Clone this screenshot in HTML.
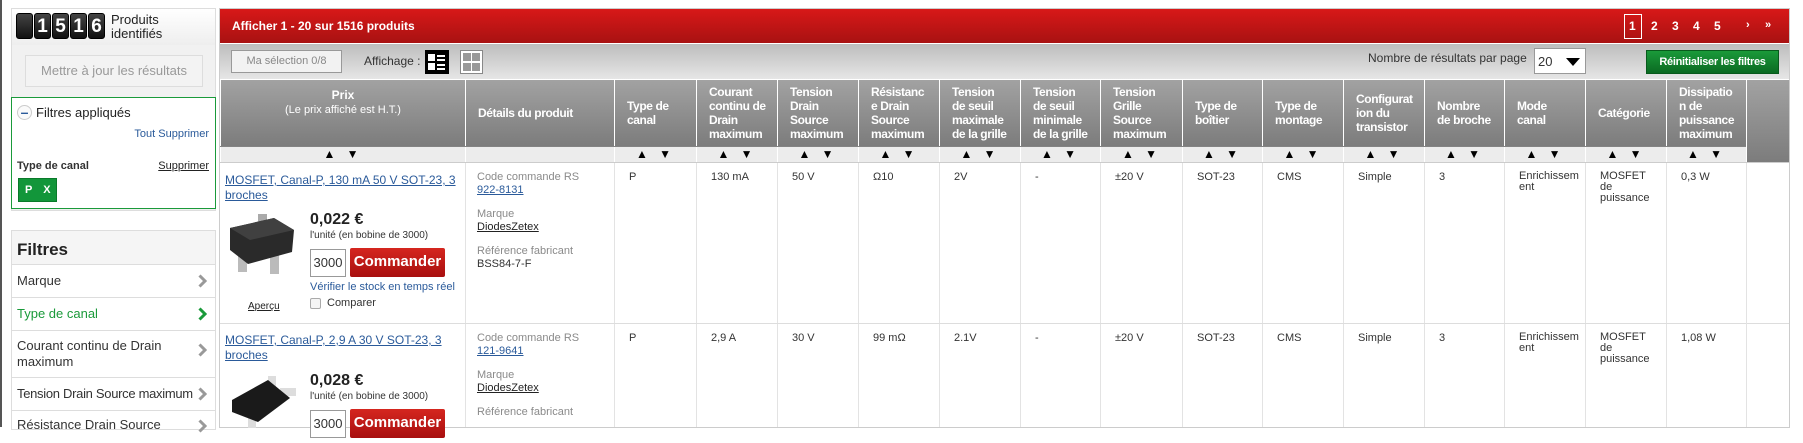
<!DOCTYPE html>
<html><head><meta charset="utf-8"><style>
*{box-sizing:border-box;margin:0;padding:0}
body{width:1803px;height:427px;overflow:hidden;background:#fff;font-family:"Liberation Sans",Arial,sans-serif;font-size:12px;color:#333;position:relative}
.a{position:absolute}
.tile{position:absolute;top:13px;width:17px;height:26px;background:linear-gradient(#444,#111);border-radius:3px;color:#fff;font-weight:bold;font-size:19px;text-align:center;line-height:26px;border:1px solid #000}
.hd{position:absolute;top:80px;height:66px;background:linear-gradient(#a2a2a2,#7c7c7c);color:#fff;font-weight:bold;font-size:12px;line-height:14px;border-left:1px solid #fff;padding:0 1px 0 12px;display:flex;align-items:center;letter-spacing:-.4px}
.sr{position:absolute;top:147px;height:15px;background:#ececec;border-left:1px solid #fff;text-align:center;font-size:12px;line-height:15px;color:#000;letter-spacing:4px}
.cell{position:absolute;border-left:1px solid #e3e3e3;font-size:11px;line-height:13px;padding:8px 0 0 14px;color:#333}
.item{position:absolute;left:12px;width:203px;border-top:1px solid #ddd;font-size:13px;line-height:16px;padding-left:5px;display:flex;align-items:center}
.chev{position:absolute;right:8px;top:50%;margin-top:-7px}
.lnk{color:#2a5a9a;text-decoration:underline}
.gr{color:#8a8a8a}
.btn{position:absolute;background:linear-gradient(#d5261f,#a80f0f);color:#fff;font-weight:bold;font-size:15px;text-align:center;border-radius:2px}
.inp{position:absolute;border:1px solid #999;background:#fff;font-size:13px;text-align:center}
</style></head><body>
<div class="a" style="left:0;top:0;width:2px;height:427px;background:#555"></div>
<div class="a" style="left:11px;top:8px;width:205px;height:203px;border:1px solid #ddd;background:#f1f1f1"></div>
<div class="a" style="left:12px;top:9px;width:203px;height:36px;background:linear-gradient(#fff,#eee)"></div>
<div class="tile" style="left:16px"></div>
<div class="tile" style="left:34px">1</div>
<div class="tile" style="left:52px">5</div>
<div class="tile" style="left:70px">1</div>
<div class="tile" style="left:88px">6</div>
<div class="a" style="left:111px;top:13px;font-size:13px;line-height:14px;color:#222">Produits<br>identifiés</div>
<div class="a" style="left:25px;top:55px;width:178px;height:32px;border:1px solid #ddd;background:#f3f3f3;color:#999;font-size:13px;text-align:center;line-height:30px">Mettre à jour les résultats</div>
<div class="a" style="left:11px;top:97px;width:205px;height:112px;border:1px solid #1a9a3a;background:#fff"></div>
<div class="a" style="left:17px;top:105px;width:15px;height:15px;border:1px solid #ccc;border-radius:50%;background:#fafafa;color:#2a5a9a;font-weight:bold;text-align:center;line-height:12px;font-size:14px">–</div>
<div class="a" style="left:36px;top:105px;font-size:13px;color:#222">Filtres appliqués</div>
<div class="a lnk" style="right:1594px;top:128px;font-size:11px;text-decoration:none">Tout Supprimer</div>
<div class="a" style="left:17px;top:160px;font-size:11px;font-weight:bold;color:#333">Type de canal</div>
<div class="a" style="right:1594px;top:160px;font-size:11px;text-decoration:underline;color:#222">Supprimer</div>
<div class="a" style="left:18px;top:178px;width:39px;height:24px;background:#12963a;border:1px solid #0a7a2a;color:#fff;font-weight:bold;font-size:11px;line-height:22px;padding-left:6px;word-spacing:8px">P X</div>
<div class="a" style="left:11px;top:230px;width:205px;height:200px;border:1px solid #ddd;background:#fff"></div>
<div class="a" style="left:12px;top:231px;width:203px;height:33px;background:#f5f5f5;font-size:17px;font-weight:bold;color:#222;padding:9px 0 0 5px">Filtres</div>
<div class="item" style="top:264px;height:33px">Marque<svg class="chev" width="9" height="14"><path d="M1.5 1.5L7 7L1.5 12.5" stroke="#999" stroke-width="3" fill="none"/></svg></div>
<div class="item" style="top:297px;height:33px;color:#1a9a3a">Type de canal<svg class="chev" width="9" height="14"><path d="M1.5 1.5L7 7L1.5 12.5" stroke="#1a9a3a" stroke-width="3" fill="none"/></svg></div>
<div class="item" style="top:330px;height:47px">Courant continu de Drain<br>maximum<svg class="chev" style="margin-top:-11px" width="9" height="14"><path d="M1.5 1.5L7 7L1.5 12.5" stroke="#999" stroke-width="3" fill="none"/></svg></div>
<div class="item" style="top:377px;height:33px;letter-spacing:-.3px">Tension Drain Source maximum<svg class="chev" width="9" height="14"><path d="M1.5 1.5L7 7L1.5 12.5" stroke="#999" stroke-width="3" fill="none"/></svg></div>
<div class="item" style="top:410px;height:33px;align-items:flex-start;padding-top:6px">Résistance Drain Source<svg class="chev" style="top:8px;margin-top:0" width="9" height="14"><path d="M1.5 1.5L7 7L1.5 12.5" stroke="#999" stroke-width="3" fill="none"/></svg></div>
<div class="a" style="left:219px;top:8px;width:1571px;height:420px;border:1px solid #ccc"></div>
<div class="a" style="left:220px;top:9px;width:1569px;height:34px;background:linear-gradient(#d81818,#a81212);color:#fff;font-weight:bold;font-size:12px;line-height:34px;padding-left:12px">Afficher 1 - 20 sur 1516 produits</div>
<div class="a" style="left:1624px;top:14px;width:18px;height:25px;border:1px solid #fff"></div>
<div class="a" style="left:1629px;top:19px;color:#fff;font-weight:bold;font-size:12px">1</div>
<div class="a" style="left:1651px;top:19px;color:#fff;font-weight:bold;font-size:12px;word-spacing:11px">2 3 4 5</div>
<div class="a" style="left:1746px;top:19px;color:#fff;font-weight:bold;font-size:11px">›</div>
<div class="a" style="left:1765px;top:19px;color:#fff;font-weight:bold;font-size:11px">»</div>
<div class="a" style="left:220px;top:44px;width:1569px;height:35px;background:linear-gradient(#bdbdbd,#e6e6e6)"></div>
<div class="a" style="left:231px;top:50px;width:111px;height:23px;border:1px solid #999;background:#f2f2f2;color:#888;font-size:11px;text-align:center;line-height:21px">Ma sélection 0/8</div>
<div class="a" style="left:364px;top:54px;font-size:12px;color:#333">Affichage :</div>
<div class="a" style="left:425px;top:50px;width:24px;height:24px;background:#000">
 <div class="a" style="left:3px;top:4px;width:7px;height:7px;background:#fff"></div><div class="a" style="left:3px;top:13px;width:7px;height:7px;background:#fff"></div>
 <div class="a" style="left:12px;top:5px;width:8px;height:2px;background:#fff"></div><div class="a" style="left:12px;top:9px;width:8px;height:2px;background:#fff"></div>
 <div class="a" style="left:12px;top:14px;width:8px;height:2px;background:#fff"></div><div class="a" style="left:12px;top:18px;width:8px;height:2px;background:#fff"></div></div>
<div class="a" style="left:460px;top:50px;width:23px;height:24px;border:1px solid #888;background:#fff">
 <div class="a" style="left:2px;top:2px;width:8px;height:8px;background:#999"></div><div class="a" style="left:11px;top:2px;width:8px;height:8px;background:#999"></div>
 <div class="a" style="left:2px;top:12px;width:8px;height:8px;background:#999"></div><div class="a" style="left:11px;top:12px;width:8px;height:8px;background:#999"></div></div>
<div class="a" style="left:1368px;top:51px;font-size:12px;color:#333">Nombre de résultats par page</div>
<div class="a" style="left:1534px;top:48px;width:52px;height:26px;border:1px solid #999;background:#fff;font-size:13px;padding:5px 0 0 3px">20<span class="a" style="right:5px;top:9px;border-left:7px solid transparent;border-right:7px solid transparent;border-top:8px solid #000"></span></div>
<div class="a" style="left:1646px;top:50px;width:133px;height:24px;background:linear-gradient(#1a9a3a,#0b6a22);border:1px solid #085a1c;color:#fff;font-size:11px;font-weight:bold;text-align:center;line-height:22px;letter-spacing:-.3px">Réinitialiser les filtres</div>
<div class="a" style="left:220px;top:80px;width:1569px;height:82px;background:linear-gradient(#a2a2a2,#7c7c7c)"></div>
<div class="hd" style="left:220px;width:245px;display:block;text-align:center;padding:8px 0 0;letter-spacing:0">Prix<br><span style="font-weight:normal;font-size:11px">(Le prix affiché est H.T.)</span></div>
<div class="hd" style="left:465px;width:149px">Détails du produit</div>
<div class="hd" style="left:614px;width:82px">Type de<br>canal</div>
<div class="hd" style="left:696px;width:81px">Courant<br>continu de<br>Drain<br>maximum</div>
<div class="hd" style="left:777px;width:81px">Tension<br>Drain<br>Source<br>maximum</div>
<div class="hd" style="left:858px;width:81px">Résistanc<br>e Drain<br>Source<br>maximum</div>
<div class="hd" style="left:939px;width:81px;white-space:nowrap">Tension<br>de seuil<br>maximale<br>de la grille</div>
<div class="hd" style="left:1020px;width:80px;white-space:nowrap">Tension<br>de seuil<br>minimale<br>de la grille</div>
<div class="hd" style="left:1100px;width:82px">Tension<br>Grille<br>Source<br>maximum</div>
<div class="hd" style="left:1182px;width:80px">Type de<br>boîtier</div>
<div class="hd" style="left:1262px;width:81px">Type de<br>montage</div>
<div class="hd" style="left:1343px;width:81px;white-space:nowrap">Configurat<br>ion du<br>transistor</div>
<div class="hd" style="left:1424px;width:80px;white-space:nowrap">Nombre<br>de broche</div>
<div class="hd" style="left:1504px;width:81px">Mode<br>canal</div>
<div class="hd" style="left:1585px;width:81px">Catégorie</div>
<div class="hd" style="left:1666px;width:80px;white-space:nowrap">Dissipatio<br>n de<br>puissance<br>maximum</div>
<div class="a" style="left:1746px;top:80px;width:1px;height:82px;background:#fff"></div>
<div class="sr" style="left:220px;width:245px">▲ ▼</div>
<div class="sr" style="left:465px;width:149px"></div>
<div class="sr" style="left:614px;width:82px">▲ ▼</div>
<div class="sr" style="left:696px;width:81px">▲ ▼</div>
<div class="sr" style="left:777px;width:81px">▲ ▼</div>
<div class="sr" style="left:858px;width:81px">▲ ▼</div>
<div class="sr" style="left:939px;width:81px">▲ ▼</div>
<div class="sr" style="left:1020px;width:80px">▲ ▼</div>
<div class="sr" style="left:1100px;width:82px">▲ ▼</div>
<div class="sr" style="left:1182px;width:80px">▲ ▼</div>
<div class="sr" style="left:1262px;width:81px">▲ ▼</div>
<div class="sr" style="left:1343px;width:81px">▲ ▼</div>
<div class="sr" style="left:1424px;width:80px">▲ ▼</div>
<div class="sr" style="left:1504px;width:81px">▲ ▼</div>
<div class="sr" style="left:1585px;width:81px">▲ ▼</div>
<div class="sr" style="left:1666px;width:80px">▲ ▼</div>
<div class="a" style="left:220px;top:162px;width:1569px;height:1px;background:#ccc"></div>
<div class="a" style="left:220px;top:323px;width:1569px;height:1px;background:#ddd"></div>
<div class="a lnk" style="left:225px;top:173px;font-size:12px;line-height:15px;width:236px">MOSFET, Canal-P, 130 mA 50 V SOT-23, 3 broches</div>
<svg class="a" style="left:228px;top:214px" width="70" height="62" viewBox="0 0 70 62"><rect x="30" y="0" width="9" height="10" fill="#aaa"/><rect x="10" y="36" width="9" height="22" fill="#bbb"/><rect x="42" y="38" width="9" height="22" fill="#bbb"/><polygon points="2,14 46,4 66,16 64,38 20,50 2,36" fill="#2a2a2a"/><polygon points="2,14 46,4 66,16 22,26" fill="#404040"/></svg>
<div class="a" style="left:310px;top:211px;font-size:16px;font-weight:bold;color:#222">0,022 €</div>
<div class="a" style="left:310px;top:230px;font-size:10px;color:#333">l'unité (en bobine de 3000)</div>
<div class="inp" style="left:310px;top:249px;width:36px;height:28px;line-height:26px">3000</div>
<div class="btn" style="left:350px;top:248px;width:95px;height:29px;line-height:27px">Commander</div>
<div class="a" style="left:310px;top:281px;font-size:11px;color:#2a5a9a">Vérifier le stock en temps réel</div>
<div class="a" style="left:310px;top:298px;width:11px;height:11px;border:1px solid #aaa;border-radius:2px;background:#f5f5f5"></div>
<div class="a" style="left:327px;top:297px;font-size:11px">Comparer</div>
<div class="a" style="left:248px;top:301px;font-size:10px;text-decoration:underline;color:#222">Aperçu</div>
<div class="cell" style="left:465px;top:163px;width:149px;height:160px;padding-left:11px"><span class="gr">Code commande RS</span><br><span class="lnk">922-8131</span><br><div style="height:11px"></div><span class="gr">Marque</span><br><span style="text-decoration:underline;color:#222">DiodesZetex</span><br><div style="height:11px"></div><span class="gr">Référence fabricant</span><br>BSS84-7-F</div>
<div class="cell" style="left:614px;top:163px;height:160px">P</div>
<div class="cell" style="left:696px;top:163px;height:160px">130 mA</div>
<div class="cell" style="left:777px;top:163px;height:160px">50 V</div>
<div class="cell" style="left:858px;top:163px;height:160px">Ω10</div>
<div class="cell" style="left:939px;top:163px;height:160px">2V</div>
<div class="cell" style="left:1020px;top:163px;height:160px">-</div>
<div class="cell" style="left:1100px;top:163px;height:160px">±20 V</div>
<div class="cell" style="left:1182px;top:163px;height:160px">SOT-23</div>
<div class="cell" style="left:1262px;top:163px;height:160px">CMS</div>
<div class="cell" style="left:1343px;top:163px;height:160px">Simple</div>
<div class="cell" style="left:1424px;top:163px;height:160px">3</div>
<div class="cell" style="left:1504px;top:163px;height:160px;line-height:11px">Enrichissem<br>ent</div>
<div class="cell" style="left:1585px;top:163px;height:160px;line-height:11px">MOSFET<br>de<br>puissance</div>
<div class="cell" style="left:1666px;top:163px;height:160px">0,3 W</div>
<div class="cell" style="left:1746px;top:163px;height:264px;padding:0"></div>
<div class="a lnk" style="left:225px;top:333px;font-size:12px;line-height:15px;width:236px">MOSFET, Canal-P, 2,9 A 30 V SOT-23, 3 broches</div>
<svg class="a" style="left:228px;top:372px" width="72" height="56" viewBox="0 0 72 56"><rect x="40" y="4" width="8" height="14" fill="#ddd"/><rect x="52" y="16" width="16" height="8" fill="#ddd"/><rect x="20" y="40" width="8" height="16" fill="#ddd"/><polygon points="4,28 40,8 62,26 30,50 4,40" fill="#1a1a1a"/></svg>
<div class="a" style="left:310px;top:372px;font-size:16px;font-weight:bold;color:#222">0,028 €</div>
<div class="a" style="left:310px;top:391px;font-size:10px;color:#333">l'unité (en bobine de 3000)</div>
<div class="inp" style="left:310px;top:410px;width:36px;height:28px;line-height:26px">3000</div>
<div class="btn" style="left:350px;top:409px;width:95px;height:29px;line-height:27px">Commander</div>
<div class="cell" style="left:465px;top:324px;width:149px;height:103px;padding-left:11px"><span class="gr">Code commande RS</span><br><span class="lnk">121-9641</span><br><div style="height:11px"></div><span class="gr">Marque</span><br><span style="text-decoration:underline;color:#222">DiodesZetex</span><br><div style="height:11px"></div><span class="gr">Référence fabricant</span></div>
<div class="cell" style="left:614px;top:324px;height:103px">P</div>
<div class="cell" style="left:696px;top:324px;height:103px">2,9 A</div>
<div class="cell" style="left:777px;top:324px;height:103px">30 V</div>
<div class="cell" style="left:858px;top:324px;height:103px">99 mΩ</div>
<div class="cell" style="left:939px;top:324px;height:103px">2.1V</div>
<div class="cell" style="left:1020px;top:324px;height:103px">-</div>
<div class="cell" style="left:1100px;top:324px;height:103px">±20 V</div>
<div class="cell" style="left:1182px;top:324px;height:103px">SOT-23</div>
<div class="cell" style="left:1262px;top:324px;height:103px">CMS</div>
<div class="cell" style="left:1343px;top:324px;height:103px">Simple</div>
<div class="cell" style="left:1424px;top:324px;height:103px">3</div>
<div class="cell" style="left:1504px;top:324px;height:103px;line-height:11px">Enrichissem<br>ent</div>
<div class="cell" style="left:1585px;top:324px;height:103px;line-height:11px">MOSFET<br>de<br>puissance</div>
<div class="cell" style="left:1666px;top:324px;height:103px">1,08 W</div>
</body></html>
